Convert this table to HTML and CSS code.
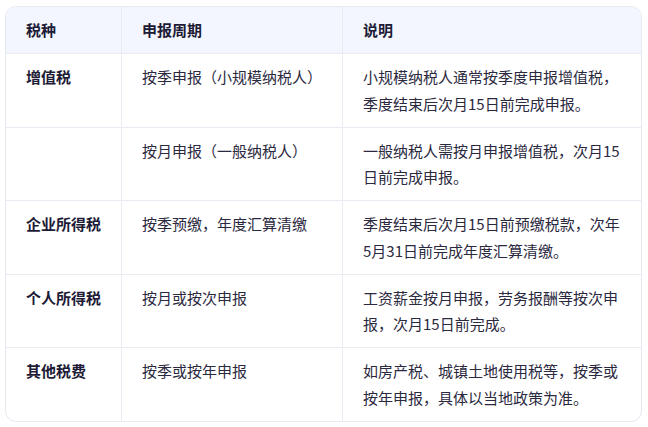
FILE: index.html
```html
<!DOCTYPE html>
<html lang="zh-CN">
<head>
<meta charset="utf-8">
<title>申报周期</title>
<link rel="stylesheet" href="styles.css">
</head>
<body>
<div class="card">
  <table class="tax-table">
    <colgroup>
      <col class="c1">
      <col class="c2">
      <col class="c3">
    </colgroup>
    <thead>
      <tr>
        <th>税种</th>
        <th>申报周期</th>
        <th>说明</th>
      </tr>
    </thead>
    <tbody>
      <tr>
        <td class="name">增值税</td>
        <td>按季申报（小规模纳税人）</td>
        <td>小规模纳税人通常按季度申报增值税，季度结束后次月15日前完成申报。</td>
      </tr>
      <tr>
        <td class="name"></td>
        <td>按月申报（一般纳税人）</td>
        <td>一般纳税人需按月申报增值税，次月15日前完成申报。</td>
      </tr>
      <tr>
        <td class="name">企业所得税</td>
        <td>按季预缴，年度汇算清缴</td>
        <td>季度结束后次月15日前预缴税款，次年5月31日前完成年度汇算清缴。</td>
      </tr>
      <tr>
        <td class="name">个人所得税</td>
        <td>按月或按次申报</td>
        <td>工资薪金按月申报，劳务报酬等按次申报，次月15日前完成。</td>
      </tr>
      <tr>
        <td class="name">其他税费</td>
        <td>按季或按年申报</td>
        <td>如房产税、城镇土地使用税等，按季或按年申报，具体以当地政策为准。</td>
      </tr>
    </tbody>
  </table>
</div>
</body>
</html>
```

FILE: styles.css
```css
html, body {
  margin: 0;
  padding: 0;
  background: #ffffff;
}

body {
  padding: 6px 6px 0 5px;
  font-family: "Noto Sans CJK SC", "Noto Sans", sans-serif;
  font-size: 15px;
  line-height: 26.25px;
  color: #2b2940;
}

.card {
  width: 637px;
  box-sizing: border-box;
  border: 1px solid #e7e9f1;
  border-radius: 11px;
  overflow: hidden;
}

.tax-table {
  width: 100%;
  table-layout: fixed;
  border-collapse: separate;
  border-spacing: 0;
}

.c1 { width: 115px; }
.c2 { width: 221px; }
.c3 { width: 299px; }

.tax-table th,
.tax-table td {
  padding: 10px 20px;
  text-align: left;
  vertical-align: top;
  border-left: 1px solid #e9ebf2;
}

.tax-table th:first-child,
.tax-table td:first-child {
  border-left: none;
}

.tax-table th {
  background: #f3f6fe;
  font-weight: 700;
  color: #1d1b36;
}

.tax-table td {
  border-top: 1px solid #e9ebf2;
}

.tax-table td.name {
  font-weight: 700;
  color: #1d1b36;
}
```
